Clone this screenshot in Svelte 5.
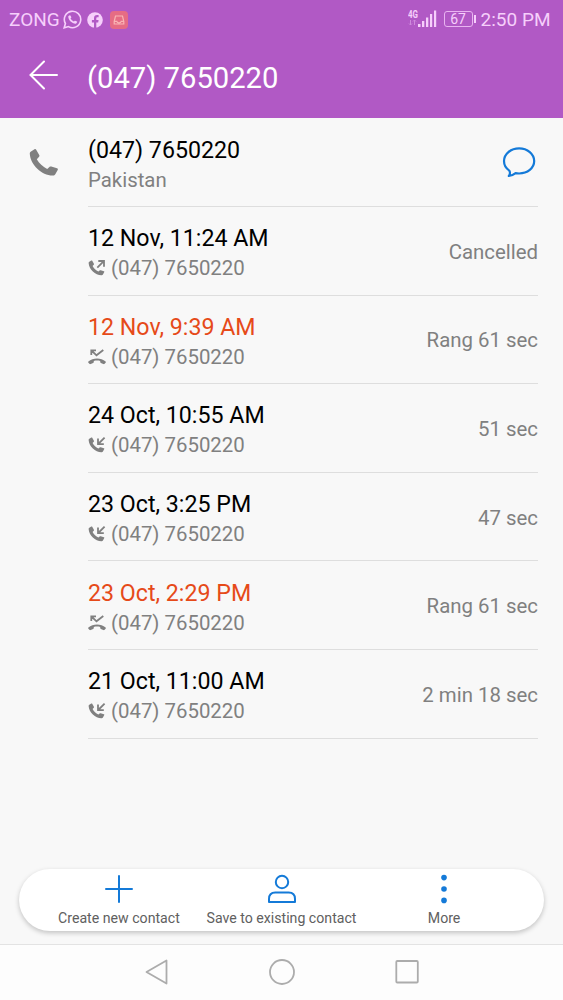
<script lang="ts">
  type CallKind = 'outgoing' | 'missed' | 'incoming';

  interface Call {
    date: string;
    kind: CallKind;
    result: string;
  }

  const phone = '(047) 7650220';

  const calls: Call[] = [
    { date: '12 Nov, 11:24 AM', kind: 'outgoing', result: 'Cancelled' },
    { date: '12 Nov, 9:39 AM', kind: 'missed', result: 'Rang 61 sec' },
    { date: '24 Oct, 10:55 AM', kind: 'incoming', result: '51 sec' },
    { date: '23 Oct, 3:25 PM', kind: 'incoming', result: '47 sec' },
    { date: '23 Oct, 2:29 PM', kind: 'missed', result: 'Rang 61 sec' },
    { date: '21 Oct, 11:00 AM', kind: 'incoming', result: '2 min 18 sec' }
  ];
</script>

{#snippet handset()}
  <path
    d="M2 3.500 5.500 1.300c.7-.4 1.300-.2 1.700.4l3 5.200c.5.8.3 1.400-.3 2L7.800 11.200c2.400 4.200 5.900 7.500 10.400 9.700l2.200-1.900c.6-.5 1.100-.6 1.900-.4l5.700 1.700c.9.3 1.100.9.7 1.700l-2.400 4.200c-.5.9-1.200 1.300-2.300 1.300C13 27.800 1.500 17 .8 6 .7 4.800 1 4.100 2 3.500z"
  />
{/snippet}

{#snippet callIcon(kind: CallKind)}
  <svg class="call-icon" width="18" height="18" viewBox="0 0 18 18" aria-hidden="true">
    {#if kind === 'missed'}
      <path
        class="fill"
        d="M.4 13.600C5 9.400 13 9.400 17.600 13.600c.4.400.4.800 0 1.200l-1 1c-.4.400-.8.400-1.300.2l-2.400-1.100c-.5-.2-.7-.5-.7-1v-.9c-2-.6-4.400-.6-6.400 0v.9c0 .5-.2.800-.7 1L2.700 16c-.5.200-.9.200-1.300-.2l-1-1c-.4-.4-.4-.8 0-1.200z"
      />
      <path class="line" d="M3.300 7V2.300H8M3.500 2.500 8.500 7.300 15.300 2" />
    {:else}
      <g class="fill" transform="translate(.2 .8) scale(.56)">{@render handset()}</g>
      {#if kind === 'outgoing'}
        <path class="line" d="M10.300 2H16v5.700M15.800 2.200 9.300 8.700" />
      {:else}
        <path class="line" d="M10 2.600v5.600h5.800M10.200 8 16.600 1.600" />
      {/if}
    {/if}
  </svg>
{/snippet}

<div class="screen">
  <header>
    <div class="status">
      <span>ZONG</span>
      <svg class="whatsapp" width="19" height="19" viewBox="0 0 19 19">
        <path
          class="outline"
          d="M1.200 17.800 2.400 13.500A8.200 8.200 0 1 1 5.500 16.600z"
        />
        <g transform="translate(5 4.900) scale(.32)">{@render handset()}</g>
      </svg>
      <svg class="facebook" width="16" height="16" viewBox="0 0 16 16">
        <circle cx="8" cy="8" r="7.800" />
        <path
          class="f"
          d="M7 16v-5.600H4.900V8H7V6.300c0-2.100 1.200-3.200 3.100-3.200.8 0 1.500.1 1.500.1v2h-1c-1 0-1.300.6-1.300 1.200V8h2.300l-.4 2.400H9.300V16z"
        />
      </svg>
      <svg class="inbox" width="18" height="18" viewBox="0 0 18 18">
        <rect width="18" height="18" rx="4" />
        <path d="M4.200 10.500 5.500 5h7l1.300 5.500v2.500H4.200zM4.200 10.300h2.600c.5 2 3.900 2 4.400 0h2.600" />
      </svg>

      <svg class="signal" width="29" height="20" viewBox="0 0 29 20">
        <text x="0" y="8.500" textLength="10" lengthAdjust="spacingAndGlyphs">4G</text>
        <path class="weak" d="M2.500 11v5M1 14.500 2.500 16 4 14.500M6.500 16v-5M5 12.500 6.500 11 8 12.500" />
        <path d="M10 15h2.500v3H10zM14 12h2.300v6H14zM18 8.500h2.300V18H18zM22 5h2.200v13H22zM26 1.500h2.200V18H26z" />
      </svg>
      <span class="battery">67</span>
      <span class="clock">2:50 PM</span>
    </div>
    <div class="title-bar">
      <svg width="30" height="30" viewBox="0 0 30 30" aria-label="Back">
        <path d="M15 1.500 1.500 15 15 28.500M1.700 15H28" />
      </svg>
      <h1>{phone}</h1>
    </div>
  </header>

  <main>
    <section class="row">
      <svg class="phone" width="30" height="30" viewBox="0 0 30 30">{@render handset()}</svg>
      <div class="body">
        <div class="text">
          <div class="main">{phone}</div>
          <div class="sub">Pakistan</div>
        </div>
        <svg class="bubble" width="34" height="32" viewBox="0 0 34 32">
          <path
            d="M7.300 24.600C3.800 22.300 2 18.800 2 15.100 2 8 8.700 2.300 17.100 2.300S32.200 8 32.200 15.100 25.500 27.500 17.100 27.500c-1.300 0-2.400-.1-3.500-.3-1.900 1.500-4 2.400-6.800 2.800 1.200-1.600 1.600-3.500.5-5.400z"
          />
        </svg>
      </div>
    </section>

    {#each calls as call}
      <section class="row">
        <div class="body">
          <div class="text">
            <div class="main" class:missed={call.kind === 'missed'}>{call.date}</div>
            <div class="sub">{@render callIcon(call.kind)}{phone}</div>
          </div>
          <div class="result">{call.result}</div>
        </div>
      </section>
    {/each}
  </main>

  <div class="actions">
    <div class="action">
      <svg width="30" height="30" viewBox="0 0 30 30">
        <path d="M15 2v26M2 15h26" />
      </svg>
      <span>Create new contact</span>
    </div>
    <div class="action">
      <svg width="30" height="30" viewBox="0 0 30 30">
        <circle cx="15" cy="8" r="6.200" />
        <path d="M2 28v-3c0-4.200 2.300-6.500 6.300-6.500h13.400c4 0 6.300 2.300 6.300 6.500v3z" />
      </svg>
      <span>Save to existing contact</span>
    </div>
    <div class="action">
      <svg class="dots" width="30" height="30" viewBox="0 0 30 30">
        <circle cx="15" cy="3.600" r="2.800" />
        <circle cx="15" cy="15" r="2.800" />
        <circle cx="15" cy="26.400" r="2.800" />
      </svg>
      <span>More</span>
    </div>
  </div>

  <nav>
    <svg width="26" height="28" viewBox="0 0 26 28">
      <path d="M22.500 2.500v23L2.500 14z" />
    </svg>
    <svg width="26" height="28" viewBox="0 0 26 28">
      <circle cx="13" cy="14" r="12" />
    </svg>
    <svg width="26" height="28" viewBox="0 0 26 28">
      <rect x="2.300" y="3" width="21.500" height="21.500" rx="1" />
    </svg>
  </nav>
</div>

<style>
  :global(body) {
    margin: 0;
  }
  .screen {
    display: flex;
    flex-direction: column;
    width: 563px;
    height: 1000px;
    overflow: hidden;
    background: #f8f8f8;
    color: #000;
    font-family: Roboto, sans-serif;
  }
  svg {
    display: block;
    flex: none;
  }

  header {
    height: 118px;
    flex: none;
    background: #b159c5;
    color: #fff;
  }
  .status {
    display: flex;
    align-items: center;
    height: 39px;
    padding: 0 12.500px 0 9px;
    color: #f6cffb;
    fill: #f6cffb;
    font-size: 19px;
  }
  .whatsapp {
    margin-left: 3px;
  }
  .whatsapp .outline {
    fill: none;
    stroke: #f6cffb;
    stroke-width: 1.600;
  }
  .facebook {
    margin-left: 5px;
  }
  .facebook .f {
    fill: #b159c5;
  }
  .inbox {
    margin-left: 7px;
  }
  .inbox rect {
    fill: #e66c84;
  }
  .inbox path {
    fill: none;
    stroke: #f9b5b4;
    stroke-width: 1.200;
  }
  .signal {
    margin: -2px 0 0 auto;
  }
  .signal text {
    font-size: 10px;
    font-weight: 700;
  }
  .signal .weak {
    fill: none;
    stroke: #cf8add;
  }
  .battery {
    position: relative;
    box-sizing: border-box;
    width: 29px;
    height: 16px;
    margin: -1px 8px 0 7px;
    border: 1px solid #e9b4f1;
    border-radius: 3px;
    font-size: 14px;
    line-height: 14px;
    text-align: center;
  }
  .battery::after {
    content: '';
    position: absolute;
    top: 3px;
    right: -4px;
    width: 2px;
    height: 8px;
    background: #f6cffb;
  }
  .title-bar {
    display: flex;
    align-items: center;
    gap: 28px;
    height: 73px;
    padding-left: 29px;
  }
  .title-bar svg {
    margin-top: -2px;
    fill: none;
    stroke: #fff;
    stroke-width: 2;
    stroke-linecap: round;
  }
  h1 {
    margin: 5px 0 0;
    font-size: 29.200px;
    font-weight: 400;
    line-height: 36px;
  }

  main {
    flex: 1;
    padding-top: 0.400px;
  }
  .row {
    display: flex;
    justify-content: flex-end;
    height: 88.600px;
    padding-right: 25px;
  }
  .phone {
    margin: 30px 29px 0 0;
    fill: #808080;
  }
  .body {
    box-sizing: border-box;
    display: flex;
    align-items: center;
    justify-content: space-between;
    width: 450px;
    border-bottom: 1px solid #dedede;
  }
  .text {
    padding-top: 6px;
  }
  .main {
    font-size: 23.200px;
    line-height: 29px;
  }
  .missed {
    color: #e64a19;
  }
  .sub {
    display: flex;
    align-items: center;
    color: #808080;
    font-size: 20.400px;
    line-height: 30px;
  }
  .call-icon {
    margin-right: 5px;
  }
  .call-icon .fill {
    fill: #808080;
  }
  .call-icon .line {
    fill: none;
    stroke: #808080;
    stroke-width: 1.800;
  }
  .bubble {
    margin-right: 2px;
    fill: none;
    stroke: #147ad8;
    stroke-width: 2.200;
    stroke-linejoin: round;
  }
  .result {
    padding-top: 2px;
    color: #808080;
    font-size: 20.400px;
  }

  .actions {
    box-sizing: border-box;
    display: grid;
    grid-template-columns: repeat(3, 162.600px);
    justify-content: center;
    height: 62px;
    flex: none;
    margin: 0 19px 13px;
    padding-top: 5px;
    border-radius: 31px;
    background: #fff;
    box-shadow: 0 2px 5px rgba(0, 0, 0, 0.220);
  }
  .action {
    display: flex;
    flex-direction: column;
    align-items: center;
    gap: 6px;
    color: #606060;
    font-size: 14.150px;
    line-height: 16px;
    white-space: nowrap;
  }
  .action svg {
    fill: none;
    stroke: #147ad8;
    stroke-width: 2;
    stroke-linejoin: round;
    stroke-linecap: round;
  }
  .action .dots {
    fill: #147ad8;
    stroke: none;
  }

  nav {
    box-sizing: border-box;
    display: flex;
    justify-content: center;
    gap: 99px;
    height: 56px;
    flex: none;
    padding-top: 13px;
    border-top: 1px solid #e3e3e3;
    background: #fdfdfd;
  }
  nav svg {
    fill: none;
    stroke: #acacac;
    stroke-width: 1.800;
    stroke-linejoin: round;
  }
</style>
